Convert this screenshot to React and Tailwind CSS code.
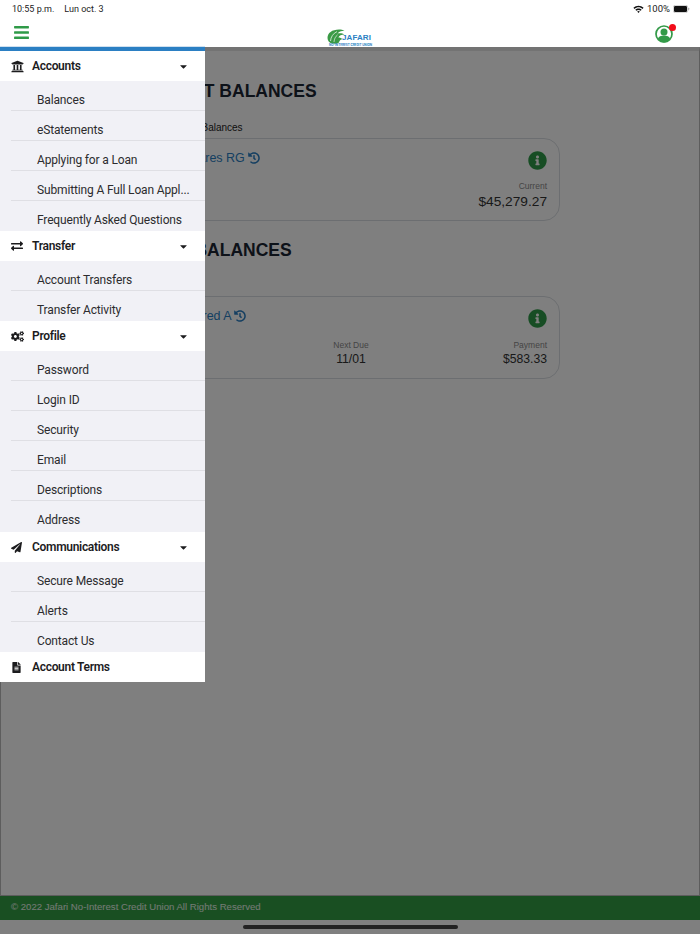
import React from "react";
import {
  FaBars,
  FaCaretDown,
  FaCogs,
  FaExchangeAlt,
  FaFileAlt,
  FaHistory,
  FaInfoCircle,
  FaPaperPlane,
  FaUniversity,
} from "react-icons/fa";

const menu = [
  {
    title: "Accounts",
    icon: <FaUniversity className="text-[13px]" />,
    items: ["Balances", "eStatements", "Applying for a Loan", "Submitting A Full Loan Appl...", "Frequently Asked Questions"],
  },
  {
    title: "Transfer",
    icon: <FaExchangeAlt className="text-[12px]" />,
    items: ["Account Transfers", "Transfer Activity"],
  },
  {
    title: "Profile",
    icon: <FaCogs className="text-[13px]" />,
    items: ["Password", "Login ID", "Security", "Email", "Descriptions", "Address"],
    listClass: "bg-[#f1f1f6] pb-px",
  },
  {
    title: "Communications",
    icon: <FaPaperPlane className="text-[11px]" />,
    items: ["Secure Message", "Alerts", "Contact Us"],
  },
  {
    title: "Account Terms",
    icon: <FaFileAlt className="text-[11px]" />,
    items: [],
  },
];

const StatusBar = () => (
  <div className="flex h-[15px] items-end justify-between pl-[12px] pr-[10px] font-['Roboto',sans-serif] text-[9px] leading-[12px] text-[#222]">
    <div className="flex gap-[10px]">
      <span>10:55 p.m.</span>
      <span>Lun oct. 3</span>
    </div>
    <div className="flex items-center gap-[3px]">
      <svg width="11" height="8" viewBox="0 0 11 8">
        <path d="M0.4 2.8C3.2 0 7.8 0 10.6 2.8L9.5 3.9C7.3 1.8 3.7 1.8 1.5 3.9Z" fill="#111" />
        <path d="M2.3 4.7C4 3 7 3 8.7 4.7L7.6 5.8C6.5 4.8 4.5 4.8 3.4 5.8Z" fill="#111" />
        <path d="M4.2 6.6C5 5.8 6 5.8 6.8 6.6L5.5 8Z" fill="#111" />
      </svg>
      <span className="text-[9.5px]">100%</span>
      <svg width="17" height="8" viewBox="0 0 17 8">
        <rect x="0.3" y="0.3" width="14.4" height="7.4" rx="2" fill="none" stroke="#aaa" strokeWidth="0.6" />
        <rect x="1" y="1" width="13" height="6" rx="1.3" fill="#111" />
        <rect x="15.2" y="2.7" width="1" height="2.6" rx="0.5" fill="#aaa" />
      </svg>
    </div>
  </div>
);

const Logo = () => (
  <div className="flex flex-col items-start">
    <div className="flex h-[14px] items-end">
      <svg width="18" height="15" viewBox="0 0 18 15" className="mb-[-2px]">
        <path d="M0.5 9C0.5 4 5 0.5 12 0.5C14 0.5 16 1 17.5 1.8C14 1.8 11.5 3 10.5 4.6C12.5 4 15.5 4.2 17.5 5.4C14.5 5.4 12 6.6 11.4 8.6C13 8.6 14.5 9.2 15.5 10.2C13.4 10.4 12.4 11.6 12 13.5C10.5 14.6 8 15 5.5 14.6C2.5 14 0.5 12 0.5 9Z" fill="#3a9a46" />
        <path d="M3.5 12C3.8 8 6 4.5 10 2.6" stroke="#fff" strokeWidth="0.7" fill="none" />
        <path d="M7 13C7.2 10 8.4 7.5 10.6 5.8" stroke="#fff" strokeWidth="0.6" fill="none" />
      </svg>
      <span className="ml-[-3px] font-['Liberation_Sans',sans-serif] text-[8px] font-bold leading-[9px] tracking-[0.1px] text-[#2b7fc3]">JAFARI</span>
    </div>
    <span className="ml-[2px] mt-[2px] whitespace-nowrap text-[3px] font-bold leading-[3px] text-[#2b7fc3]">
      NO-INTEREST CREDIT UNION
    </span>
  </div>
);

const UserIcon = () => (
  <div className="relative h-[18px] w-[18px]">
    <svg width="18" height="18" viewBox="0 0 18 18">
      <circle cx="9" cy="9" r="8" fill="#fff" stroke="#339a48" strokeWidth="1.7" />
      <circle cx="9" cy="7" r="3.5" fill="#339a48" />
      <path d="M2.8 14C3.6 11.4 6 10.6 9 10.6C12 10.6 14.4 11.4 15.2 14C13.8 16.4 11.6 17.4 9 17.4C6.4 17.4 4.2 16.4 2.8 14Z" fill="#339a48" />
    </svg>
    <span className="absolute right-[-3px] top-[-1px] h-[7px] w-[7px] rounded-full bg-[#f20d1a]" />
  </div>
);

const Header = () => (
  <div className="bg-white">
    <StatusBar />
    <div className="flex h-[32px] items-start pl-[14px] pr-[27px]">
      <FaBars className="mt-[9px] text-[#2f9a48]" style={{ width: 15, height: 17 }} />
      <div className="ml-[298px] mt-[13px]">
        <Logo />
      </div>
      <div className="ml-auto mt-[10px]">
        <UserIcon />
      </div>
    </div>
  </div>
);

const Card = ({ title, titleClass, children }) => (
  <div className="ml-[20px] h-[83px] w-[539px] rounded-[16px] border border-[#d9dde2] bg-white pl-[13px] pr-[12px]">
    <div className="flex items-start justify-between">
      <a className={titleClass}>
        {title}
        <FaHistory className="text-[12px]" />
      </a>
      <FaInfoCircle className="mt-[12px] text-[19px] text-[#2f9a48]" />
    </div>
    {children}
  </div>
);

const Stat = ({ label, value, className, valueClass }) => (
  <div className={className}>
    <div className="text-[8.5px] leading-[12px] text-[#8a8a8a]">{label}</div>
    <div className={valueClass}>{value}</div>
  </div>
);

const Balances = () => (
  <div className="flex-1 border border-t-[4px] border-[#bbb] border-t-[#e6e6e6] bg-white font-['Liberation_Sans',sans-serif]">
    <h2 className="mt-[28px] pl-[126px] text-[17.5px] font-bold leading-[24px] text-[#1a2433]">ACCOUNT BALANCES</h2>
    <p className="mt-[19px] pl-[171px] text-[10px] leading-[12px] text-[#222]">Share Balances</p>
    <div className="mt-[4px]">
      <Card title="Shares RG" titleClass="ml-[148px] mt-[11px] flex items-center gap-[3px] text-[12.5px] leading-[16px] text-[#2b7fc3]">
        <Stat
          label="Current"
          value="$45,279.27"
          className="mt-[10px] text-right"
          valueClass="text-[13.7px] leading-[19px] text-[#333]"
        />
      </Card>
    </div>
    <h2 className="mt-[17px] pl-[139px] text-[17.5px] font-bold leading-[24px] text-[#1a2433]">LOAN BALANCES</h2>
    <div className="mt-[34px]">
      <Card title="Secured A" titleClass="ml-[139px] mt-[11px] flex items-center gap-[2px] text-[12.5px] leading-[16px] text-[#2b7fc3]">
        <div className="mt-[11px] grid grid-cols-[1fr_100px_146px]">
          <div />
          <Stat label="Next Due" value="11/01" className="text-center" valueClass="text-[12.2px] leading-[16px] text-[#333]" />
          <Stat label="Payment" value="$583.33" className="text-right" valueClass="text-[12.2px] leading-[16px] text-[#333]" />
        </div>
      </Card>
    </div>
  </div>
);

const Sidebar = () => (
  <div className="absolute left-0 top-[46px] w-[205px] border-t border-[#cfe0ef] font-['Roboto',sans-serif]">
    <div className="border-t-[4px] border-[#2b7fc3] bg-white">
      {menu.map((group) => (
        <div key={group.title}>
          <div className="flex h-[30px] items-center pl-[11px] pr-[16px] text-[12px] font-semibold tracking-[-0.3px] text-[#1c1c1e]">
            <span className="flex w-[21px] items-center">{group.icon}</span>
            <span>{group.title}</span>
            {group.items.length > 0 && <FaCaretDown className="ml-auto text-[11px]" />}
          </div>
          {group.items.length > 0 && (
            <div className={group.listClass || "bg-[#f1f1f6]"}>
              {group.items.map((item, i) => (
                <div key={item} className="pl-[11px]">
                  <div
                    className={
                      i < group.items.length - 1
                        ? "flex h-[30px] items-center border-b border-[#dfdfe4] pl-[26px] pt-[9px] text-[12px] tracking-[-0.15px] text-[#2c2c2e]"
                        : "flex h-[30px] items-center pl-[26px] pt-[8px] text-[12px] tracking-[-0.15px] text-[#2c2c2e]"
                    }
                  >
                    {item}
                  </div>
                </div>
              ))}
            </div>
          )}
        </div>
      ))}
    </div>
  </div>
);

export default function App() {
  return (
    <div className="relative flex h-[934px] w-[700px] flex-col overflow-hidden bg-white font-['Inter',sans-serif]">
      <Header />
      <Balances />
      <div className="flex h-[24px] items-center bg-[#339e45] pb-[1px] pl-[11px] font-['Liberation_Sans',sans-serif] text-[9.6px] text-white/90">
        © 2022 Jafari No-Interest Credit Union All Rights Reserved
      </div>
      <div className="h-[14px]" />
      <div className="absolute inset-x-0 bottom-0 top-[47px] bg-black/50" />
      <div className="absolute bottom-[5px] left-[243px] h-[4px] w-[215px] rounded-full bg-[#222]" />
      <Sidebar />
    </div>
  );
}
